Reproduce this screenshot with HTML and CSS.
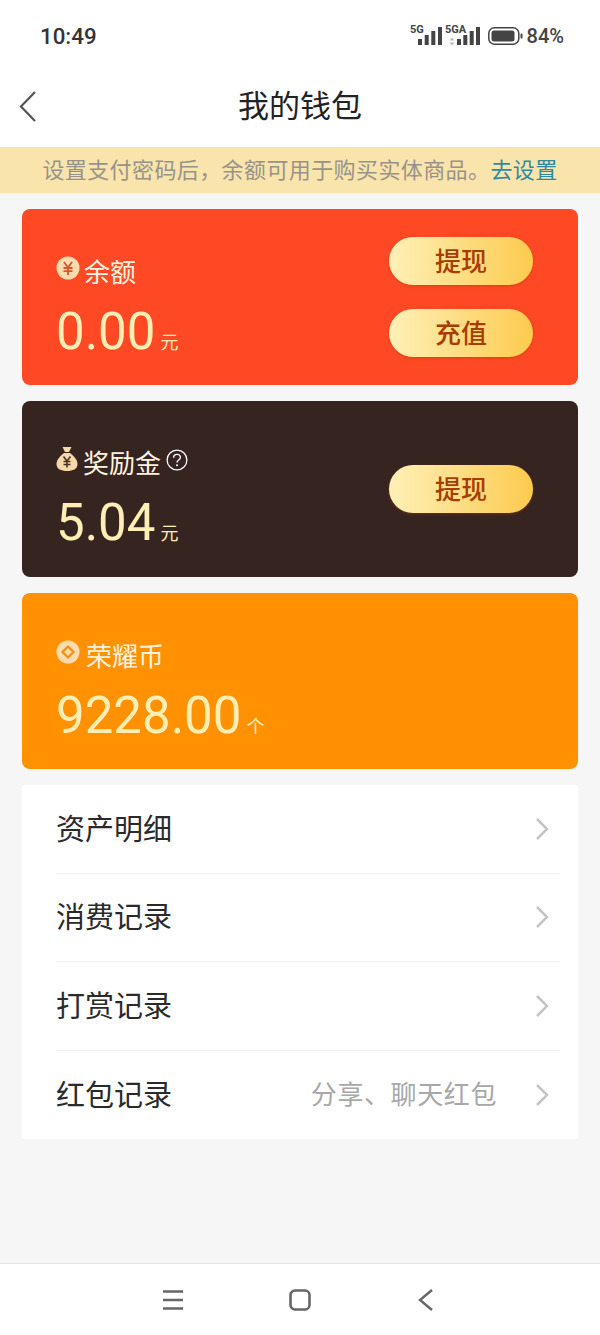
FILE: index.html
```html
<!DOCTYPE html>
<html lang="zh-CN">

<head>
  <meta charset="UTF-8" />
  <meta name="viewport" content="width=device-width, initial-scale=1.0" />
  <title>我的钱包</title>
  <link rel="stylesheet" href="styles.css">
</head>

<body>
  <div class="page">

    <div class="status-bar">
      <span class="time">10:49</span>
      <div class="status-icons">
        <svg class="signal" width="32" height="24" viewBox="0 0 32 24">
          <text x="0" y="9" class="net-label">5G</text>
          <rect x="8" y="15" width="4" height="6" />
          <rect x="14.700" y="11" width="4" height="10" />
          <rect x="21.300" y="7" width="4" height="14" />
          <rect x="28" y="3" width="4" height="18" />
        </svg>
        <svg class="signal signal-second" width="35" height="24" viewBox="0 0 35 24">
          <text x="0" y="9" class="net-label">5GA</text>
          <path d="M7 13.500l2.500 3h-5zM7 21.500l2.500-3h-5z" fill="#bbb" />
          <rect x="12" y="15" width="4" height="6" />
          <rect x="18.300" y="11" width="4" height="10" />
          <rect x="24.700" y="7" width="4" height="14" />
          <rect x="31" y="3" width="4" height="18" />
        </svg>
        <svg class="battery" width="35" height="18" viewBox="0 0 35 18">
          <rect x="0.800" y="0.800" width="30" height="16.400" rx="5.500" fill="none" stroke="#444" stroke-width="1.500" />
          <rect x="3.500" y="3.500" width="23" height="11" rx="2.500" fill="#444" />
          <rect x="32.500" y="6.500" width="2" height="5" rx="1" fill="#444" />
        </svg>
        <span class="battery-text">84%</span>
      </div>
    </div>

    <div class="nav-bar">
      <svg class="nav-back" width="20" height="32" viewBox="0 0 20 32">
        <path d="M17 2L3 16.500 17 31" fill="none" stroke="#555" stroke-width="2.200" />
      </svg>
      <h1>我的钱包</h1>
    </div>

    <div class="notice">设置支付密码后，余额可用于购买实体商品。<span class="notice-link">去设置</span></div>

    <div class="card card-red">
      <div class="card-info">
        <div class="card-title">
          <svg class="title-icon" width="24" height="24" viewBox="0 0 24 24">
            <circle cx="12" cy="12" r="11.500" fill="#fcdcae" />
            <path d="M8 6l4 5.500 4-5.500M12 11.500v7.500M7.500 12h9M7.500 15.200h9" fill="none" stroke="#d8552a" stroke-width="1.800" />
          </svg>
          <span>余额</span>
        </div>
        <div class="amount">0.00<span class="unit">元</span></div>
      </div>
      <div class="card-actions">
        <button class="gold-btn"><span>提现</span></button>
        <button class="gold-btn"><span>充值</span></button>
      </div>
    </div>

    <div class="card card-dark">
      <div class="card-info">
        <div class="card-title title-bonus">
          <svg class="title-icon" width="22" height="26" viewBox="0 0 22 26">
            <path d="M6.500 1h9l-2.500 5H9z" fill="#f6d9a8" />
            <path d="M8 7h6c4 3 7.500 7 7.500 11 0 5-4.500 7-10.500 7S.5 23 .5 18c0-4 3.500-8 7.500-11z" fill="#f6d9a8" />
            <path d="M7.500 10.500l3.500 4.500 3.500-4.500M11 15v6.500M7.500 15.500h7M7.500 18.500h7" fill="none" stroke="#4a3228" stroke-width="1.600" />
          </svg>
          <span>奖励金</span>
          <svg class="help" width="22" height="22" viewBox="0 0 24 24">
            <circle cx="12" cy="12" r="10.800" fill="none" stroke="#fff" stroke-width="1.400" />
            <path d="M8.300 9.500c0-2.200 1.500-3.600 3.700-3.600s3.700 1.400 3.700 3.400c0 2.800-3.700 2.600-3.700 5.400" fill="none" stroke="#fff" stroke-width="1.500" />
            <circle cx="12" cy="17.800" r="1.100" fill="#fff" />
          </svg>
        </div>
        <div class="amount">5.04<span class="unit">元</span></div>
      </div>
      <div class="card-actions">
        <button class="gold-btn"><span>提现</span></button>
      </div>
    </div>

    <div class="card card-orange">
      <div class="card-info">
        <div class="card-title">
          <svg class="title-icon" width="24" height="24" viewBox="0 0 24 24">
            <circle cx="12" cy="12" r="11.500" fill="#fcdcae" />
            <path d="M12 6.500l5.500 5.500-5.500 5.500-5.500-5.500z" fill="none" stroke="#f09010" stroke-width="2.200" />
          </svg>
          <span class="title-wide">荣耀币</span>
        </div>
        <div class="amount">9228.00<span class="unit">个</span></div>
      </div>
    </div>

    <div class="menu">
      <div class="menu-row">
        <span class="menu-label">资产明细</span>
        <svg class="chevron" width="14" height="24" viewBox="0 0 14 24">
          <path d="M2 2l10 10L2 22" fill="none" stroke="#c4c4c4" stroke-width="2.500" />
        </svg>
      </div>
      <div class="menu-row">
        <span class="menu-label">消费记录</span>
        <svg class="chevron" width="14" height="24" viewBox="0 0 14 24">
          <path d="M2 2l10 10L2 22" fill="none" stroke="#c4c4c4" stroke-width="2.500" />
        </svg>
      </div>
      <div class="menu-row">
        <span class="menu-label">打赏记录</span>
        <svg class="chevron" width="14" height="24" viewBox="0 0 14 24">
          <path d="M2 2l10 10L2 22" fill="none" stroke="#c4c4c4" stroke-width="2.500" />
        </svg>
      </div>
      <div class="menu-row">
        <span class="menu-label">红包记录</span>
        <span class="menu-hint">分享、聊天红包</span>
        <svg class="chevron" width="14" height="24" viewBox="0 0 14 24">
          <path d="M2 2l10 10L2 22" fill="none" stroke="#c4c4c4" stroke-width="2.500" />
        </svg>
      </div>
    </div>

    <div class="bottom-nav">
      <svg width="22" height="22" viewBox="0 0 22 22">
        <path d="M1 2.500h20M1 11h20M1 19.500h20" fill="none" stroke="#666" stroke-width="2.600" />
      </svg>
      <svg width="22" height="22" viewBox="0 0 22 22">
        <rect x="1.500" y="1.500" width="19" height="19" rx="4.500" fill="none" stroke="#666" stroke-width="2.600" />
      </svg>
      <svg class="bottom-back" width="16" height="22" viewBox="0 0 16 22">
        <path d="M14 1L2 11l12 10" fill="none" stroke="#666" stroke-width="2.400" />
      </svg>
    </div>

  </div>
</body>

</html>
```

FILE: styles.css
```css
:root {
  --background: #f6f6f6;
  --gold: #fdeeb4;
  --text-color: #222;
}

* {
  box-sizing: border-box;
}

body {
  margin: 0;
  background-color: var(--background);
  color: var(--text-color);
  font-family: "Noto Sans CJK SC", "Noto Sans", sans-serif;
}

.page {
  width: 600px;
  height: 1335px;
  display: flex;
  flex-direction: column;
  overflow: hidden;
}

/* status bar + nav */
.status-bar {
  height: 68px;
  padding: 4px 36px 0 40px;
  background-color: #fff;
  display: flex;
  justify-content: space-between;
  align-items: center;
}

.time {
  font-family: Roboto, sans-serif;
  font-size: 22.300px;
  font-weight: 500;
  color: #333;
}

.status-icons {
  display: flex;
  align-items: center;
}

.signal rect {
  fill: #444;
}

.signal-second {
  margin-left: 3px;
}

.net-label {
  font-family: Roboto, sans-serif;
  font-size: 11px;
  font-weight: 700;
  fill: #444;
}

.battery {
  margin-left: 8px;
}

.battery-text {
  margin-left: 4px;
  font-family: Roboto, sans-serif;
  font-size: 20px;
  font-weight: 500;
  color: #444;
}

.nav-bar {
  height: 79px;
  padding-bottom: 8px;
  background-color: #fff;
  display: flex;
  align-items: center;
  justify-content: center;
  position: relative;
}

.nav-bar h1 {
  margin: 0;
  font-size: 31px;
  font-weight: 400;
  line-height: 71px;
}

.nav-back {
  position: absolute;
  left: 18px;
  top: 22px;
}

.notice {
  height: 46px;
  background-color: #f9e4ac;
  color: #98938a;
  font-size: 22px;
  letter-spacing: 0.400px;
  line-height: 42px;
  text-align: center;
  white-space: nowrap;
}

.notice-link {
  color: #2f8aa0;
}

/* wallet cards */
.card {
  width: 556px;
  height: 176px;
  margin: 16px 22px 0;
  padding: 0 45px 0 34px;
  border-radius: 8px;
  display: flex;
  justify-content: space-between;
  align-items: center;
}

.card-red {
  background-color: #ff4925;
}

.card-dark {
  background-color: #362420;
}

.card-orange {
  background-color: #ff9103;
}

.card-info {
  align-self: flex-start;
  padding-top: 43px;
}

.card-title {
  height: 36px;
  display: flex;
  align-items: center;
  gap: 4px;
  color: #fff3e0;
  font-size: 26px;
}

.title-icon {
  margin-top: -4px;
}

.title-bonus {
  margin-top: -1px;
  margin-bottom: 1px;
}

.title-bonus .title-icon {
  margin-right: 1px;
}

.title-bonus .help {
  margin-left: 1px;
  margin-top: -3px;
}

.title-wide {
  margin-left: 2px;
}

.amount {
  color: var(--gold);
  font-family: Roboto, sans-serif;
  font-size: 51px;
  font-weight: 400;
  line-height: 60px;
  margin-top: 14px;
}

.unit {
  font-family: "Noto Sans CJK SC", sans-serif;
  font-size: 18px;
  font-weight: 400;
  margin-left: 5px;
}

.card-actions {
  display: flex;
  flex-direction: column;
  gap: 24px;
}

.gold-btn {
  width: 144px;
  height: 48px;
  padding: 0 0 4px;
  border: none;
  border-radius: 24px;
  background: linear-gradient(90deg, #fff0b8, #fccb4e);
  box-shadow: 0 1px 3px rgba(170, 60, 0, 0.5);
  color: #a83c05;
  font-family: "Noto Sans CJK SC", sans-serif;
  font-size: 26px;
  font-weight: 500;
}

/* menu list */
.menu {
  width: 556px;
  margin: 16px 22px 0;
  padding: 0 18px 0 34px;
  background-color: #fff;
}

.menu-row {
  height: 88.500px;
  display: flex;
  align-items: center;
  border-bottom: 1px solid #f0f0f0;
}

.menu-row:last-child {
  border-bottom: none;
}

.menu-label {
  flex: 1;
  padding-bottom: 4px;
  font-size: 29px;
  color: #2a2a2a;
}

.menu-hint {
  padding-bottom: 4px;
  font-size: 26px;
  letter-spacing: 0.600px;
  color: #a8a8a8;
  margin-right: 38px;
}

.chevron {
  margin-right: 11px;
}

.bottom-nav {
  margin-top: auto;
  height: 72px;
  background-color: #fff;
  border-top: 1px solid #e4e4e4;
  padding-left: 162px;
  display: flex;
  gap: 105px;
  align-items: center;
}

.bottom-back {
  margin-left: 2px;
}
```
